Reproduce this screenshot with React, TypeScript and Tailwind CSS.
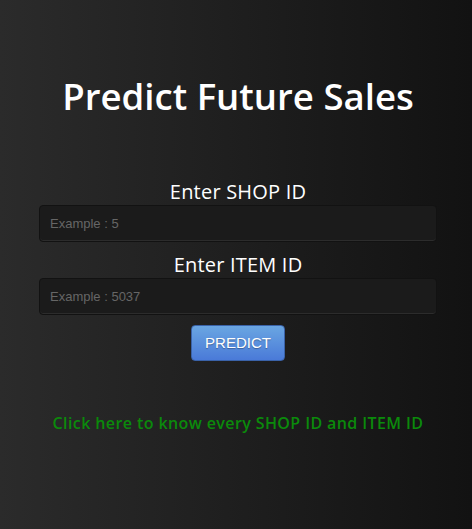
import React from 'react';

export default function App() {
    return (
        <div className="min-h-[529px] w-full bg-[linear-gradient(to_right,#2b2b2b,#121212)] font-['Open_Sans',sans-serif]">
            <div className="ml-[39px] w-[398px] pt-[71px] text-center">
                <h1 className="text-[36.6px] leading-[50px] font-semibold text-white">Predict Future Sales</h1>

                <form className="mt-[59px] flex flex-col items-center" onSubmit={(e) => e.preventDefault()}>
                    <label className="text-[20px] leading-[24px] tracking-[0.2px] text-white">Enter SHOP ID</label>
                    <input
                        className="mt-[1px] h-[37px] w-full rounded-[4px] border border-[#121212] bg-[#1b1b1b] px-[10px] font-['Liberation_Sans',sans-serif] text-[13px] text-white shadow-[inset_0_-1px_0_rgba(255,255,255,0.08)] placeholder:text-[#666] outline-none"
                        placeholder="Example : 5"
                    />
                    <label className="mt-[11px] text-[20px] leading-[24px] tracking-[0.2px] text-white">Enter ITEM ID</label>
                    <input
                        className="mt-[1px] h-[37px] w-full rounded-[4px] border border-[#121212] bg-[#1b1b1b] px-[10px] font-['Liberation_Sans',sans-serif] text-[13px] text-white shadow-[inset_0_-1px_0_rgba(255,255,255,0.08)] placeholder:text-[#666] outline-none"
                        placeholder="Example : 5037"
                    />
                    <button
                        type="submit"
                        className="mt-[10px] h-[36px] w-[94px] rounded-[4px] border border-[#3a62a8] bg-[linear-gradient(to_bottom,#6aa6e2,#4a7ad8)] font-['Liberation_Sans',sans-serif] text-[15px] text-white [text-shadow:0_1px_1px_rgba(0,0,0,0.3)]"
                    >
                        PREDICT
                    </button>
                </form>

                <a href="#" className="mt-[50px] block text-[16px] font-semibold tracking-[0.4px] text-[#0b8a0b]">
                    Click here to know every SHOP ID and ITEM ID
                </a>
            </div>
        </div>
    );
}
